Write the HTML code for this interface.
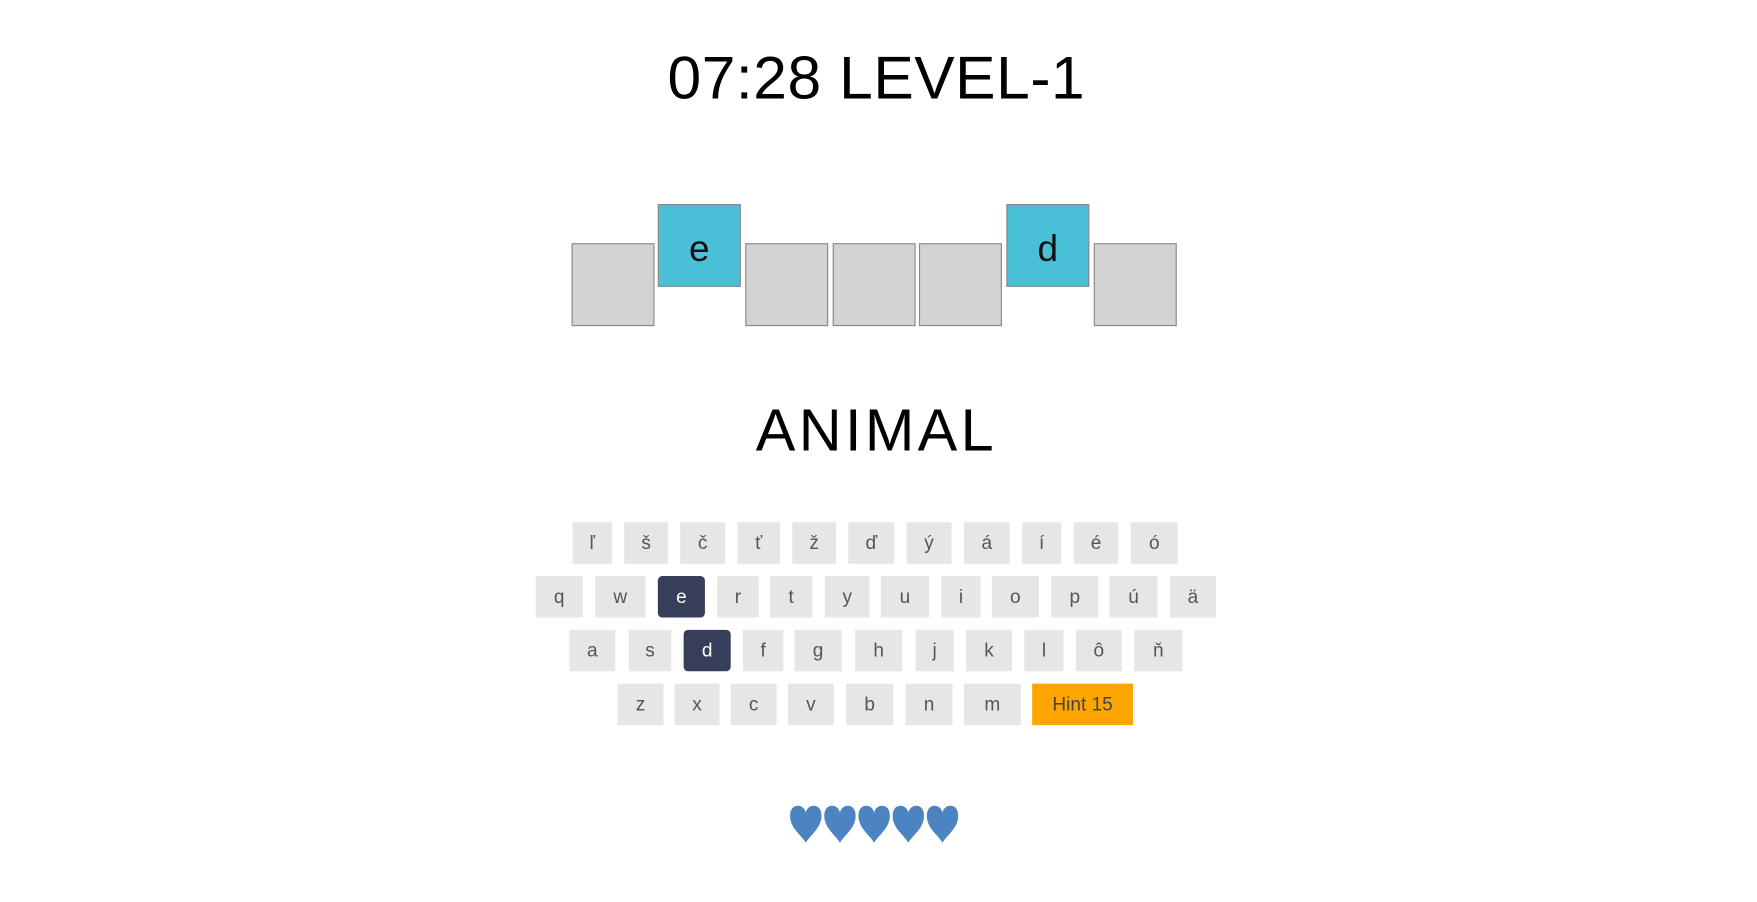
<!DOCTYPE html>
<html><head><meta charset="utf-8"><style>
html,body{margin:0;padding:0;background:#fff;overflow:hidden;width:1757px;height:902px}
#s{position:absolute;left:0;top:0;width:1560px;height:801px;transform:scale(1.1207);transform-origin:0 0;font-family:"Liberation Sans",sans-serif}
.t{position:absolute;text-align:center;width:1560px;left:0;color:#000}
.tile{position:absolute;width:74px;height:74px;background:#d3d3d3;border:1px solid #888;box-sizing:border-box}
.tile.b{background:#4ac0d6;font-size:33px;line-height:78px;text-align:center;color:#111}
.k{position:absolute;height:37px;background:#e6e6e6;color:#555;font-size:17px;line-height:37px;text-align:center}
.k.d{background:#373e59;color:#fff;border-radius:4px}
.k.h{background:#ffa500;color:#444}
</style></head><body><div id="s">
<div class="t" style="top:40px;font-size:54px;line-height:60px;left:2px;letter-spacing:0.5px">07:28 LEVEL-1</div>
<div class="tile" style="left:510px;top:217px"></div>
<div class="tile b" style="left:587px;top:182px">e</div>
<div class="tile" style="left:665px;top:217px"></div>
<div class="tile" style="left:743px;top:217px"></div>
<div class="tile" style="left:820px;top:217px"></div>
<div class="tile b" style="left:898px;top:182px">d</div>
<div class="tile" style="left:976px;top:217px"></div>
<div class="t" style="top:355px;font-size:53px;line-height:60px;letter-spacing:3px;left:2px">ANIMAL</div>

<div class="k" style="left:511px;top:466px;width:35px">ľ</div>
<div class="k" style="left:557px;top:466px;width:39px">š</div>
<div class="k" style="left:607px;top:466px;width:40px">č</div>
<div class="k" style="left:658px;top:466px;width:38px">ť</div>
<div class="k" style="left:707px;top:466px;width:39px">ž</div>
<div class="k" style="left:757px;top:466px;width:41px">ď</div>
<div class="k" style="left:809px;top:466px;width:40px">ý</div>
<div class="k" style="left:860px;top:466px;width:41px">á</div>
<div class="k" style="left:912px;top:466px;width:35px">í</div>
<div class="k" style="left:958px;top:466px;width:40px">é</div>
<div class="k" style="left:1009px;top:466px;width:42px">ó</div>

<div class="k" style="left:478px;top:514px;width:42px">q</div>
<div class="k" style="left:531px;top:514px;width:45px">w</div>
<div class="k d" style="left:587px;top:514px;width:42px">e</div>
<div class="k" style="left:640px;top:514px;width:37px">r</div>
<div class="k" style="left:687px;top:514px;width:38px">t</div>
<div class="k" style="left:736px;top:514px;width:40px">y</div>
<div class="k" style="left:786px;top:514px;width:43px">u</div>
<div class="k" style="left:840px;top:514px;width:35px">i</div>
<div class="k" style="left:885px;top:514px;width:42px">o</div>
<div class="k" style="left:938px;top:514px;width:42px">p</div>
<div class="k" style="left:990px;top:514px;width:43px">ú</div>
<div class="k" style="left:1044px;top:514px;width:41px">ä</div>

<div class="k" style="left:508px;top:562px;width:41px">a</div>
<div class="k" style="left:561px;top:562px;width:38px">s</div>
<div class="k d" style="left:610px;top:562px;width:42px">d</div>
<div class="k" style="left:663px;top:562px;width:36px">f</div>
<div class="k" style="left:709px;top:562px;width:42px">g</div>
<div class="k" style="left:763px;top:562px;width:42px">h</div>
<div class="k" style="left:817px;top:562px;width:34px">j</div>
<div class="k" style="left:862px;top:562px;width:41px">k</div>
<div class="k" style="left:914px;top:562px;width:35px">l</div>
<div class="k" style="left:960px;top:562px;width:41px">ô</div>
<div class="k" style="left:1012px;top:562px;width:43px">ň</div>

<div class="k" style="left:551px;top:610px;width:41px">z</div>
<div class="k" style="left:602px;top:610px;width:40px">x</div>
<div class="k" style="left:652px;top:610px;width:41px">c</div>
<div class="k" style="left:703px;top:610px;width:41px">v</div>
<div class="k" style="left:755px;top:610px;width:42px">b</div>
<div class="k" style="left:808px;top:610px;width:42px">n</div>
<div class="k" style="left:860px;top:610px;width:51px">m</div>
<div class="k h" style="left:921px;top:610px;width:90px">Hint 15</div>

<svg style="position:absolute;left:704px;top:718px" width="156" height="36" viewBox="0 0 156 36">
<defs><path id="h" d="M15 34 C11 27 1 21 1 10 C1 4 4 1 8 1 C11 1 14 3 15 7 C16 3 19 1 22 1 C26 1 29 4 29 10 C29 21 19 27 15 34Z" fill="#4b84c1"/></defs>
<use href="#h" x="0"/><use href="#h" x="30.5"/><use href="#h" x="61"/><use href="#h" x="91.5"/><use href="#h" x="122"/>
</svg>
</div></body></html>
